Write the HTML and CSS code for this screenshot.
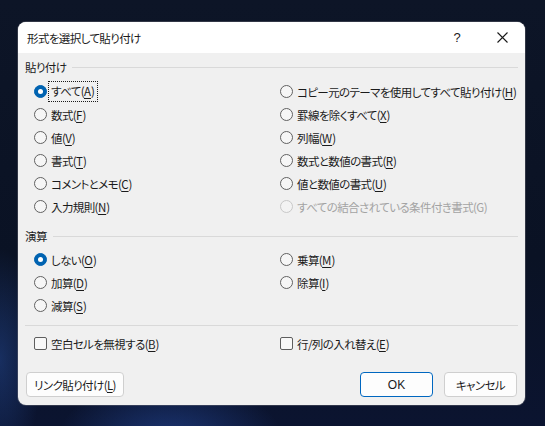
FILE: index.html
```html
<!DOCTYPE html>
<html lang="ja">
<head>
<meta charset="utf-8">
<title>形式を選択して貼り付け</title>
<link rel="stylesheet" href="styles.css">
</head>
<body>
<div class="dialog">
  <div class="titlebar">
    <span class="title">形式を選択して貼り付け</span>
    <span class="help">?</span>
    <span class="close"><svg width="11" height="11" viewBox="0 0 11 11"><path d="M0.5 0.5 L10.5 10.5 M10.5 0.5 L0.5 10.5" stroke="#1a1a1a" stroke-width="1.1" fill="none"/></svg></span>
  </div>
  <div class="body">
    <div class="group-label"><span>貼り付け</span><i class="rule"></i></div>
    <div class="grid paste">
      <div class="opt"><span class="radio on"></span><span class="lbl focus">すべて(<u>A</u>)</span></div>
      <div class="opt"><span class="radio"></span><span class="lbl">コピー元のテーマを使用してすべて貼り付け(<u>H</u>)</span></div>
      <div class="opt"><span class="radio"></span><span class="lbl">数式(<u>F</u>)</span></div>
      <div class="opt"><span class="radio"></span><span class="lbl">罫線を除くすべて(<u>X</u>)</span></div>
      <div class="opt"><span class="radio"></span><span class="lbl">値(<u>V</u>)</span></div>
      <div class="opt"><span class="radio"></span><span class="lbl">列幅(<u>W</u>)</span></div>
      <div class="opt"><span class="radio"></span><span class="lbl">書式(<u>T</u>)</span></div>
      <div class="opt"><span class="radio"></span><span class="lbl">数式と数値の書式(<u>R</u>)</span></div>
      <div class="opt"><span class="radio"></span><span class="lbl">コメントとメモ(<u>C</u>)</span></div>
      <div class="opt"><span class="radio"></span><span class="lbl">値と数値の書式(<u>U</u>)</span></div>
      <div class="opt"><span class="radio"></span><span class="lbl">入力規則(<u>N</u>)</span></div>
      <div class="opt disabled"><span class="radio"></span><span class="lbl">すべての結合されている条件付き書式(G)</span></div>
    </div>
    <div class="group-label ops-label"><span>演算</span><i class="rule"></i></div>
    <div class="grid ops">
      <div class="opt"><span class="radio on"></span><span class="lbl">しない(<u>O</u>)</span></div>
      <div class="opt"><span class="radio"></span><span class="lbl">乗算(<u>M</u>)</span></div>
      <div class="opt"><span class="radio"></span><span class="lbl">加算(<u>D</u>)</span></div>
      <div class="opt"><span class="radio"></span><span class="lbl">除算(<u>I</u>)</span></div>
      <div class="opt"><span class="radio"></span><span class="lbl">減算(<u>S</u>)</span></div>
    </div>
    <div class="sep"></div>
    <div class="grid checks">
      <div class="opt"><span class="check"></span><span class="lbl">空白セルを無視する(<u>B</u>)</span></div>
      <div class="opt"><span class="check"></span><span class="lbl">行/列の入れ替え(<u>E</u>)</span></div>
    </div>
    <div class="buttons">
      <button class="btn link">リンク貼り付け(<u>L</u>)</button>
      <span class="spacer"></span>
      <button class="btn ok">OK</button>
      <button class="btn">キャンセル</button>
    </div>
  </div>
</div>
</body>
</html>
```

FILE: styles.css
```css
html, body {
  margin: 0;
  padding: 0;
}
body {
  width: 545px;
  height: 426px;
  overflow: hidden;
  background:
    radial-gradient(ellipse 160px 90px at 170px 440px, rgba(40, 80, 170, 0.55), transparent 70%),
    radial-gradient(ellipse 60px 160px at 0px 360px, rgba(40, 80, 160, 0.45), transparent 70%),
    linear-gradient(180deg, #0d1527 0%, #0a1224 60%, #0b1430 100%);
  font-family: "Noto Sans CJK JP", "Noto Sans", sans-serif;
  font-feature-settings: "palt";
  font-size: 11.5px;
  letter-spacing: -0.6px;
  color: #1b1b1b;
}
.dialog {
  margin: 22px 0 0 18px;
  width: 507px;
  height: 383px;
  background: #f0f0f0;
  border-radius: 8px;
  overflow: hidden;
  display: flex;
  flex-direction: column;
  box-shadow: 0 0 0 1px rgba(120, 120, 130, 0.35);
}
.titlebar {
  height: 31px;
  flex: none;
  background: #ffffff;
  display: flex;
  align-items: center;
  padding-left: 9px;
}
.title {
  flex: 1;
  line-height: 16px;
}
.help {
  width: 44px;
  text-align: center;
  font-family: "Liberation Sans", sans-serif;
  font-size: 13px;
  letter-spacing: 0;
}
.close {
  width: 46px;
  display: flex;
  justify-content: center;
  align-items: center;
}
.body {
  flex: 1;
  padding: 4px 7px 8px 7px;
  display: flex;
  flex-direction: column;
}
.group-label {
  height: 20px;
  display: flex;
  align-items: center;
  gap: 6px;
  line-height: 16px;
}
.group-label .rule {
  flex: 1;
  height: 1px;
  background: #d9d9d9;
  margin-top: 1px;
}
.ops-label {
  margin-top: 8px;
}
.grid {
  display: grid;
  grid-template-columns: 246px 1fr;
  grid-auto-rows: 23px;
  padding-left: 9px;
}
.paste {
  margin-top: 3px;
}
.ops {
  margin-top: 2px;
}
.checks {
  margin-top: 6px;
}
.opt {
  display: flex;
  align-items: center;
  white-space: nowrap;
}
.lbl {
  line-height: 16px;
  padding: 1px 2px;
  margin-left: 2px;
}
.lbl u {
  text-decoration-thickness: 1px;
  text-underline-offset: 2px;
  letter-spacing: 0;
}
.focus {
  outline: 1px dotted #1b1b1b;
  outline-offset: 0;
  padding: 1px 3px 2px 2px;
}
.radio {
  width: 13px;
  height: 13px;
  box-sizing: border-box;
  border-radius: 50%;
  border: 1px solid #616161;
  background: #f6f6f6;
  flex: none;
  position: relative;
}
.radio.on {
  background: #0063b1;
  border-color: #0063b1;
}
.radio.on::after {
  content: "";
  position: absolute;
  left: 3px;
  top: 3px;
  width: 5px;
  height: 5px;
  border-radius: 50%;
  background: #ffffff;
}
.disabled .radio {
  border-color: #c8c8c8;
  background: #f3f3f3;
}
.disabled .lbl {
  color: #a3a3a3;
}
.check {
  width: 13px;
  height: 13px;
  box-sizing: border-box;
  border: 1px solid #5e5e5e;
  border-radius: 2px;
  background: #f8f8f8;
  flex: none;
}
.sep {
  height: 1px;
  background: #d9d9d9;
  margin-top: 8px;
}
.buttons {
  margin-top: auto;
  display: flex;
  align-items: center;
  padding-left: 1px;
  padding-right: 1px;
}
.spacer {
  flex: 1;
}
.btn {
  height: 25px;
  box-sizing: border-box;
  border: 1px solid #cfcfcf;
  border-radius: 4px;
  background: #fdfdfd;
  font: inherit;
  letter-spacing: inherit;
  font-feature-settings: "palt";
  color: #1b1b1b;
  padding: 0;
  width: 73px;
  margin-left: 11px;
}
.btn.link {
  width: 98px;
  margin-left: 0;
}
.btn.ok {
  border-color: #0067c0;
  font-family: "Liberation Sans", sans-serif;
  font-size: 12px;
  letter-spacing: 0;
}
.btn u {
  text-underline-offset: 2px;
}
```
